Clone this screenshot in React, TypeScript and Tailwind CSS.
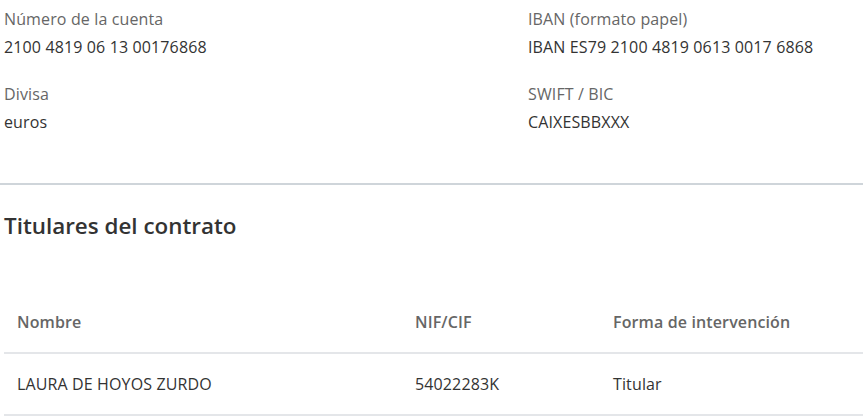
export default function App() {
  const font = { fontFamily: '"Open Sans", sans-serif' };
  return (
    <div className="w-[863px] h-[418px] bg-white overflow-hidden tracking-[0.13px]" style={font}>
      <div className="grid grid-cols-[524px_1fr] pl-[4px] pt-[7px]">
        <div className="flex flex-col">
          <div className="text-[16px] leading-[24px] text-[#666]">Número de la cuenta</div>
          <div className="text-[16px] leading-[24px] mt-[4px] text-[#333]">2100 4819 06 13 00176868</div>
        </div>
        <div className="flex flex-col">
          <div className="text-[16px] leading-[24px] text-[#666]">IBAN (formato papel)</div>
          <div className="text-[16px] leading-[24px] mt-[4px] text-[#333]">IBAN ES79 2100 4819 0613 0017 6868</div>
        </div>
        <div className="flex flex-col mt-[23px]">
          <div className="text-[16px] leading-[24px] text-[#666]">Divisa</div>
          <div className="text-[16px] leading-[24px] mt-[4px] text-[#333]">euros</div>
        </div>
        <div className="flex flex-col mt-[23px]">
          <div className="text-[16px] leading-[24px] text-[#666]">SWIFT / BIC</div>
          <div className="text-[16px] leading-[24px] mt-[4px] text-[#333]">CAIXESBBXXX</div>
        </div>
      </div>
      <div className="mt-[49px] h-[2px] bg-[#cfd5da]" />
      <div className="pl-[4px]">
        <h2 className="mt-[26px] text-[22.4px] leading-[30px] font-semibold text-[#333] tracking-normal">Titulares del contrato</h2>
        <div className="mt-[51px]">
          <div className="grid grid-cols-[411px_198px_1fr] h-[62px] items-center border-b-2 border-[#e4e6e9] text-[16px] font-semibold text-[#666]">
            <div className="pl-[13px]">Nombre</div>
            <div>NIF/CIF</div>
            <div>Forma de intervención</div>
          </div>
          <div className="grid grid-cols-[411px_198px_1fr] h-[62px] items-center border-b-2 border-[#e4e6e9] text-[16px] text-[#333]">
            <div className="pl-[13px]">LAURA DE HOYOS ZURDO</div>
            <div>54022283K</div>
            <div>Titular</div>
          </div>
        </div>
      </div>
    </div>
  );
}
